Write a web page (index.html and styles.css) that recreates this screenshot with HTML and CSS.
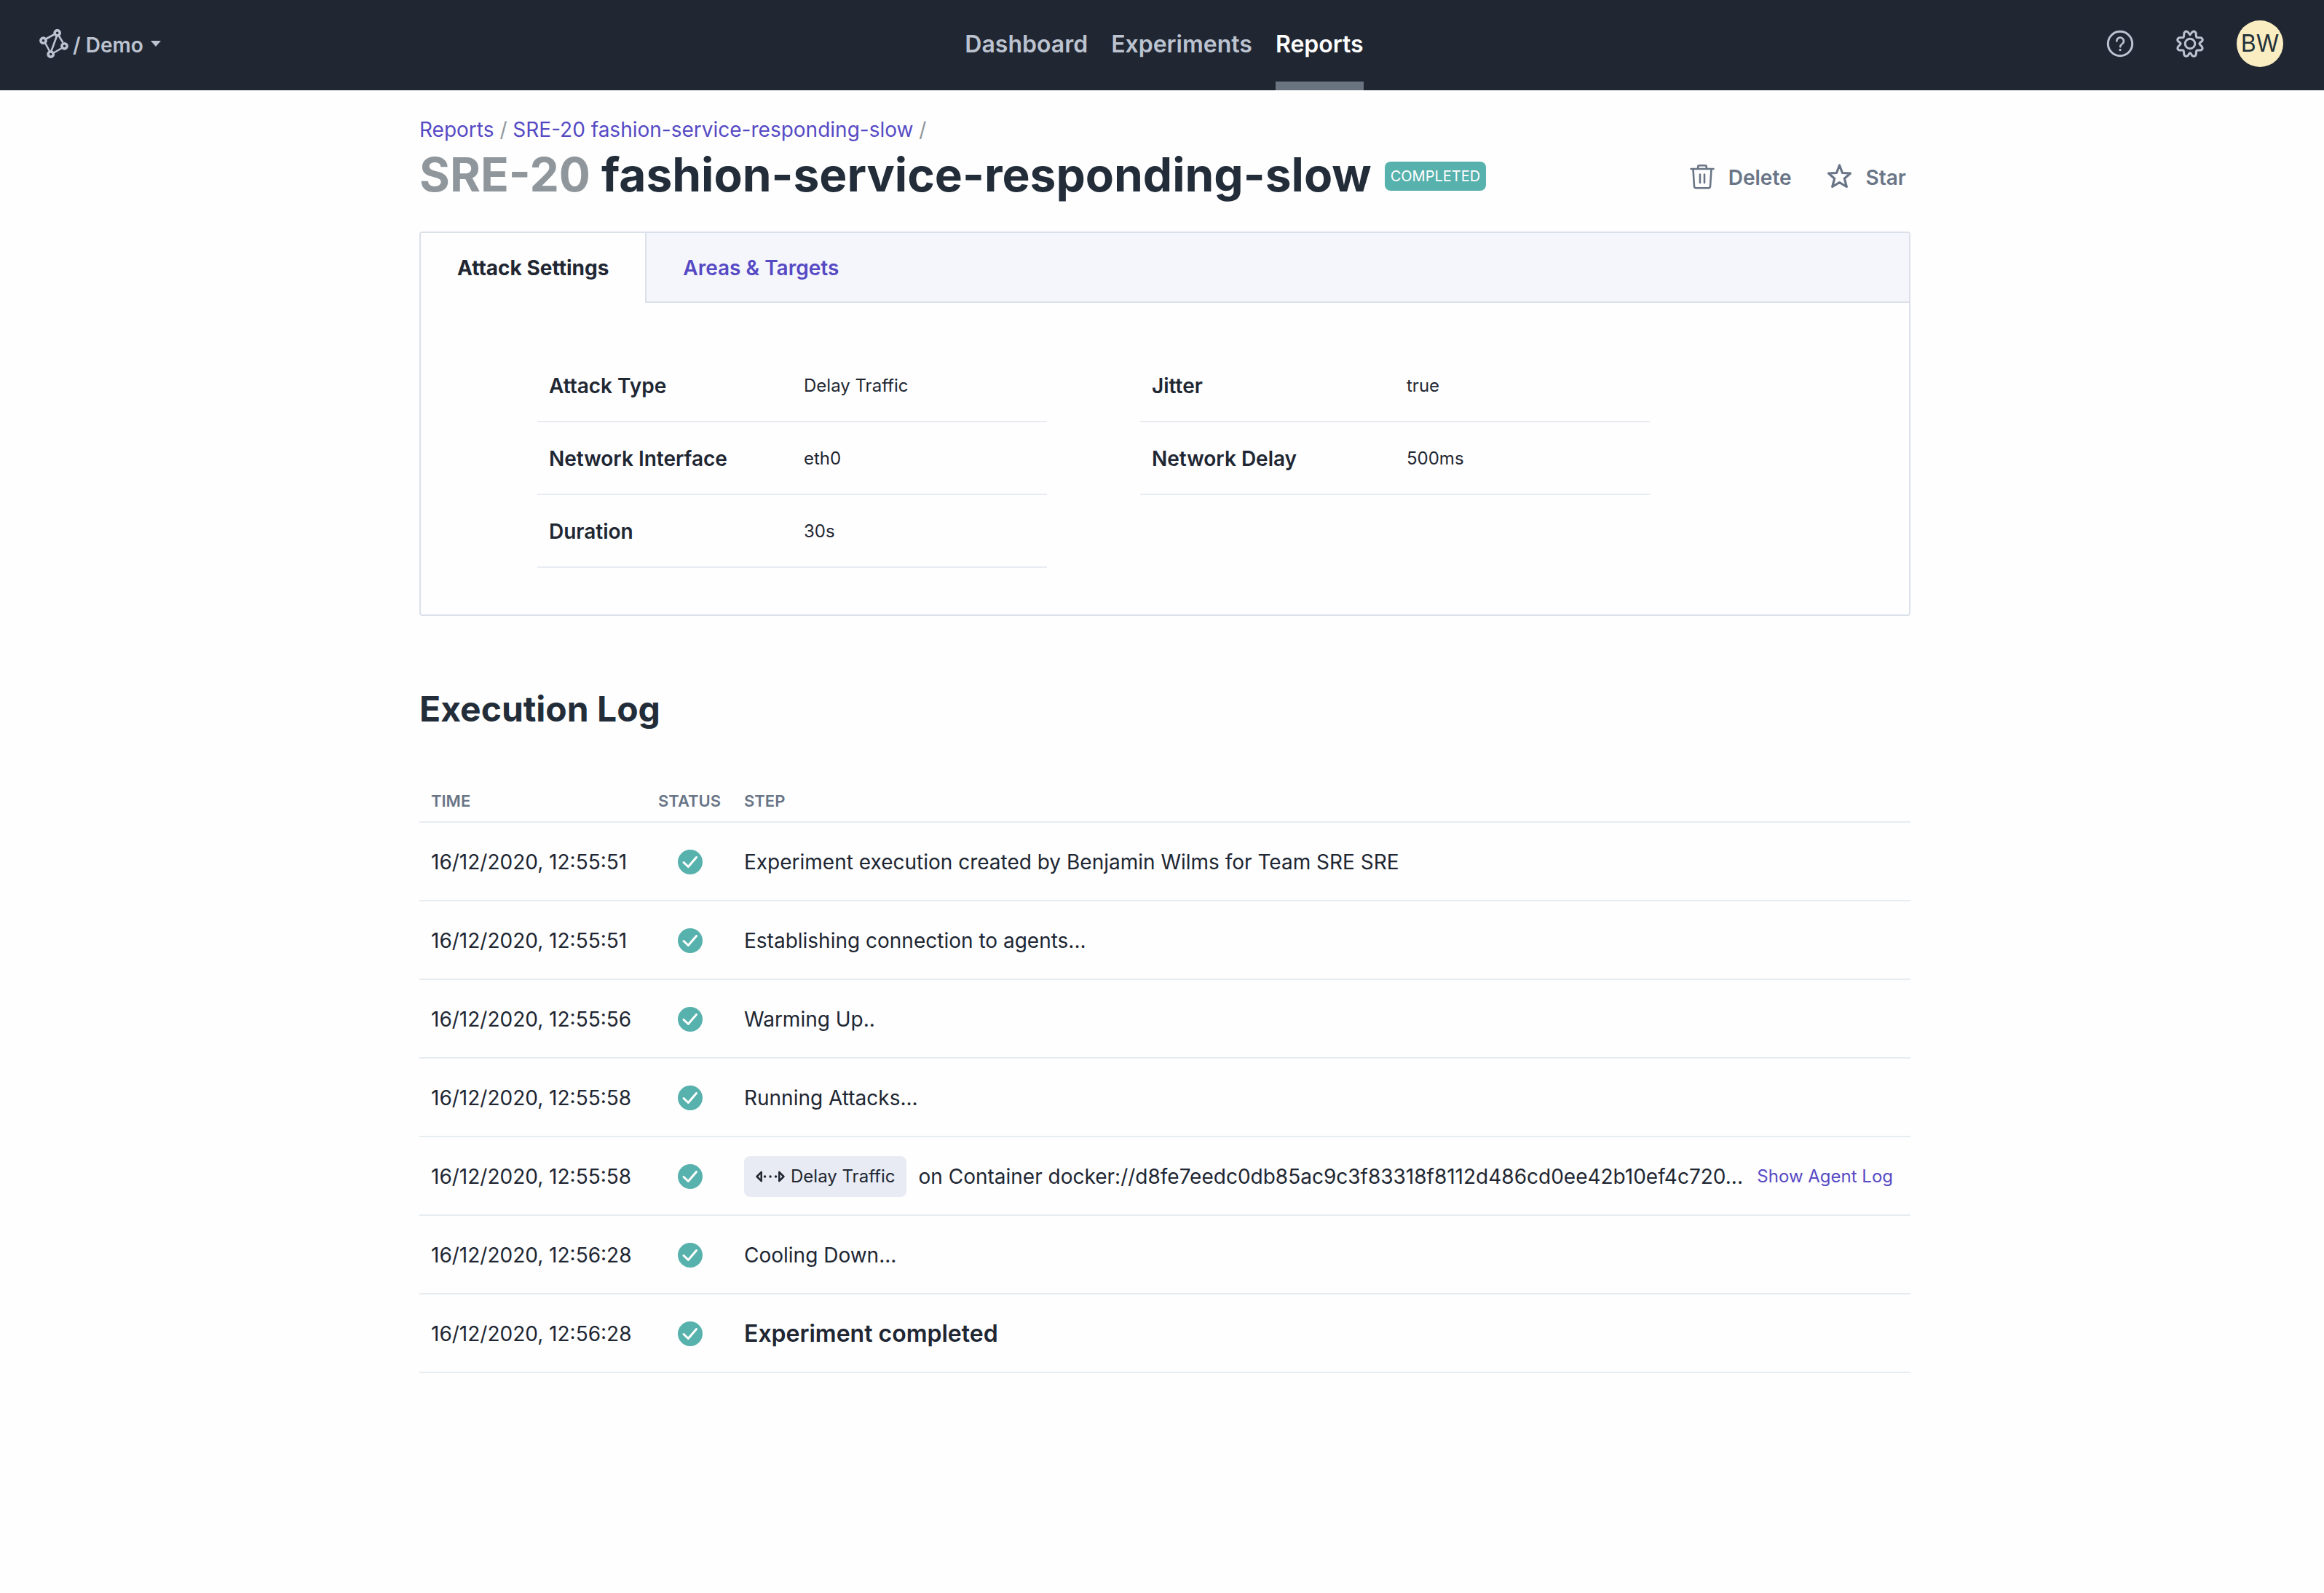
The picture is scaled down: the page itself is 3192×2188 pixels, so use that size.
FILE: index.html
```html
<!DOCTYPE html>
<html lang="en">
<head>
<meta charset="utf-8">
<title>SRE-20 fashion-service-responding-slow</title>
<link rel="stylesheet" href="styles.css">
</head>
<body>
<svg class="sprite" aria-hidden="true">
  <symbol id="check" viewBox="0 0 34 34">
    <circle cx="17" cy="17" r="17" fill="#57b1ad"/>
    <path d="M8 17.5 14.3 23.5 25.5 10.5" fill="none" stroke="#fff" stroke-width="3" stroke-linecap="round" stroke-linejoin="round"/>
  </symbol>
</svg>
<header class="topbar">
  <button class="team" type="button">
    <svg class="logo" viewBox="0 0 40 40" fill="none" stroke="currentColor" aria-hidden="true">
      <path d="M9 13.500 21 7M8 19 14 30M24 9.500 16.500 30M27 9.500 32.500 18.500M31 26 19 33" stroke-width="2.600"/>
      <circle cx="24.700" cy="5.300" r="3.600" stroke-width="3.600"/>
      <circle cx="5.500" cy="15.700" r="3.600" stroke-width="3.600"/>
      <circle cx="34.500" cy="23.300" r="3.600" stroke-width="3.600"/>
      <circle cx="15.700" cy="34.500" r="3.600" stroke-width="3.600"/>
    </svg>
    <span class="team-name">/ Demo</span>
    <svg class="caret" viewBox="0 0 14 8" fill="currentColor" aria-hidden="true"><path d="M0 0h14L7 8z"/></svg>
  </button>
  <nav class="nav">
    <a class="nav-link" href="#">Dashboard</a>
    <a class="nav-link" href="#">Experiments</a>
    <a class="nav-link nav-link-active" href="#" aria-current="page">Reports</a>
  </nav>
  <div class="tools">
    <button class="tool" type="button" aria-label="Help">
      <svg viewBox="0 0 40 40" fill="none" stroke="currentColor" stroke-linecap="round" stroke-linejoin="round" aria-hidden="true">
        <circle cx="20" cy="20" r="16.700" stroke-width="3"/>
        <path d="M15.300 16.500a4.800 4.800 0 1 1 7.500 3.800c-1.700 1.200-2.600 2-2.600 4" stroke-width="2.600"/>
        <circle cx="20" cy="28.600" r="1.700" fill="currentColor" stroke="none"/>
      </svg>
    </button>
    <button class="tool" type="button" aria-label="Settings">
      <svg viewBox="0 0 40 40" fill="none" stroke="currentColor" stroke-width="3" stroke-linejoin="round" aria-hidden="true">
        <circle cx="20" cy="20" r="6.800"/>
        <path d="M20 7.800 22.800 4.200Q25.500 1.500 28 5L28.600 10.600Q29 11.400 29.500 11.500L35 11.800Q38 13 37 16L33.200 19.200Q32.600 20 33.200 20.800L36.700 24.500Q38 27.600 35 28.900L29.800 29Q29 29.200 28.700 30L28.200 35Q26.500 38.500 23.300 36.800L20.800 33.200Q20 32.500 19.200 33.200L16.700 36.800Q13.500 38.500 11.800 35L11.300 30Q11 29.200 10.200 29L5 28.900Q2 27.600 3.300 24.500L6.800 20.800Q7.400 20 6.800 19.200L3 16Q2 13 5 11.800L10.500 11.500Q11.300 11.400 11.400 10.600L12 5Q14.500 1.500 17.200 4.200Z"/>
      </svg>
    </button>
    <button class="avatar" type="button" aria-label="Account BW">BW</button>
  </div>
</header>

<main class="page">
  <nav class="crumbs" aria-label="Breadcrumb">
    <a class="link" href="#">Reports</a> / <a class="link" href="#">SRE-20 fashion-service-responding-slow</a> /
  </nav>
  <div class="heading">
    <h1 class="title"><span class="title-key">SRE-20</span> fashion-service-responding-slow</h1>
    <span class="badge">COMPLETED</span>
    <div class="actions">
      <button class="action" type="button">
        <svg viewBox="0 0 36 36" fill="none" stroke="currentColor" stroke-width="2.600" stroke-linecap="round" stroke-linejoin="round" aria-hidden="true">
          <path d="M2.500 8h31M5.500 8.500 7 32a2.500 2.500 0 0 0 2.400 2.300h17.200A2.500 2.500 0 0 0 29 32L30.500 8.500M12.200 7.500V5.200a2 2 0 0 1 2-2h7.600a2 2 0 0 1 2 2V7.500M15 15.500v11.500M21 15.500v11.500"/>
        </svg>
        Delete
      </button>
      <button class="action" type="button">
        <svg viewBox="0 0 36 36" fill="none" stroke="currentColor" stroke-width="3.200" stroke-linejoin="round" aria-hidden="true">
          <path d="M17.500 3 21.500 13.500 32.500 14 24.300 21.200 27.300 32.500 17.500 26.500 7.700 32.500 10.700 21.200 2.500 14 13.500 13.500Z"/>
        </svg>
        Star
      </button>
    </div>
  </div>

  <section class="card">
    <div class="tabs" role="tablist">
      <button class="tab tab-active" type="button" role="tab" aria-selected="true">Attack Settings</button>
      <button class="tab" type="button" role="tab" aria-selected="false">Areas &amp; Targets</button>
    </div>
    <div class="settings">
      <dl class="facts">
        <div class="fact"><dt>Attack Type</dt><dd>Delay Traffic</dd></div>
        <div class="fact"><dt>Network Interface</dt><dd>eth0</dd></div>
        <div class="fact"><dt>Duration</dt><dd>30s</dd></div>
      </dl>
      <dl class="facts">
        <div class="fact"><dt>Jitter</dt><dd>true</dd></div>
        <div class="fact"><dt>Network Delay</dt><dd>500ms</dd></div>
      </dl>
    </div>
  </section>

  <h2 class="subtitle">Execution Log</h2>
  <table class="log">
    <thead>
      <tr><th class="col-time">TIME</th><th class="col-status">STATUS</th><th>STEP</th></tr>
    </thead>
    <tbody>
      <tr><td>16/12/2020, 12:55:51</td><td class="status"><svg role="img" aria-label="Success"><use href="#check"/></svg></td><td>Experiment execution created by Benjamin Wilms for Team SRE SRE</td></tr>
      <tr><td>16/12/2020, 12:55:51</td><td class="status"><svg role="img" aria-label="Success"><use href="#check"/></svg></td><td>Establishing connection to agents...</td></tr>
      <tr><td>16/12/2020, 12:55:56</td><td class="status"><svg role="img" aria-label="Success"><use href="#check"/></svg></td><td>Warming Up..</td></tr>
      <tr><td>16/12/2020, 12:55:58</td><td class="status"><svg role="img" aria-label="Success"><use href="#check"/></svg></td><td>Running Attacks...</td></tr>
      <tr><td>16/12/2020, 12:55:58</td><td class="status"><svg role="img" aria-label="Success"><use href="#check"/></svg></td><td>
        <div class="attack">
          <span class="chip">
            <svg viewBox="0 0 40 18" fill="none" stroke="currentColor" aria-hidden="true">
              <path d="M7.700 2.800v12.400L1.600 9zM32.300 2.800v12.400L38.400 9z" stroke-width="2.500" stroke-linejoin="round"/>
              <path d="M12.500 9h.1M20 9h.1M27.500 9h.1" stroke-width="3.400" stroke-linecap="round"/>
            </svg>
            Delay Traffic
          </span>
          <span class="target">on Container docker://d8fe7eedc0db85ac9c3f83318f8112d486cd0ee42b10ef4c720...</span>
          <a class="link agent-log" href="#">Show Agent Log</a>
        </div>
      </td></tr>
      <tr><td>16/12/2020, 12:56:28</td><td class="status"><svg role="img" aria-label="Success"><use href="#check"/></svg></td><td>Cooling Down...</td></tr>
      <tr><td>16/12/2020, 12:56:28</td><td class="status"><svg role="img" aria-label="Success"><use href="#check"/></svg></td><td class="done">Experiment completed</td></tr>
    </tbody>
  </table>
</main>
</body>
</html>
```
FILE: styles.css
```css
* {
  box-sizing: border-box;
}

body {
  margin: 0;
  background: #fefefe;
  color: #202632;
  font-family: Inter, "Liberation Sans", sans-serif;
  font-size: 28px;
  line-height: 40px;
}

button {
  margin: 0;
  padding: 0;
  border: 0;
  background: none;
  color: inherit;
  font: inherit;
  cursor: pointer;
}

svg {
  display: block;
  flex: none;
}

.sprite {
  position: absolute;
  width: 0;
  height: 0;
}

.link {
  color: #564ac4;
  text-decoration: none;
}

/* Top bar */
.topbar {
  display: grid;
  grid-template-columns: 1fr auto 1fr;
  grid-template-rows: 120px;
  align-items: center;
  height: 124px;
  padding: 0 56px 4px 54px;
  background: #202632;
  color: #bcc3d0;
}

.team {
  display: flex;
  align-items: center;
  justify-self: start;
  font-weight: 600;
}

.logo {
  width: 40px;
  height: 40px;
}

.team-name {
  margin: 4px 10px 0 6px;
}

.caret {
  width: 14px;
  height: 8px;
}

.nav {
  display: flex;
  align-self: start;
  gap: 32px;
  padding-left: 8px;
}

.nav-link {
  height: 124px;
  color: inherit;
  font-size: 32px;
  font-weight: 600;
  line-height: 122px;
  text-decoration: none;
}

.nav-link-active {
  border-bottom: 12px solid #6a7481;
  color: #fff;
}

.tools {
  display: flex;
  align-items: center;
  justify-self: end;
}

.tool {
  margin-right: 56px;
}

.tool + .avatar {
  margin-left: -12px;
}

.tool svg {
  width: 40px;
  height: 40px;
}

.avatar {
  width: 64px;
  height: 64px;
  border-radius: 50%;
  background: #faedc1;
  color: #22303a;
  font-size: 32px;
  line-height: 64px;
}

/* Page */
.page {
  box-sizing: content-box;
  max-width: 2048px;
  margin: 0 auto;
  padding: 34px 0 64px 8px;
}

.crumbs {
  color: #8f969c;
}

.heading {
  display: flex;
  align-items: center;
  gap: 18px;
  height: 88px;
}

.title {
  margin: 0;
  padding-bottom: 4px;
  color: #222d39;
  font-size: 64px;
  font-weight: 700;
  line-height: 84px;
}

.title-key {
  color: #8f969c;
}

.badge {
  height: 40px;
  padding: 0 8px;
  border-radius: 8px;
  background: #57b1ad;
  color: #fff;
  font-size: 20px;
  line-height: 40px;
}

.actions {
  display: flex;
  gap: 48px;
  margin-left: auto;
  padding: 4px 6px 0 0;
}

.action {
  display: flex;
  align-items: center;
  gap: 18px;
  color: #697586;
  font-weight: 600;
}

.action svg {
  width: 36px;
  height: 36px;
  margin-bottom: 4px;
}

/* Settings card */
.card {
  margin-top: 32px;
  border: 2px solid #dae1ea;
  border-radius: 4px;
}

.tabs {
  display: flex;
  height: 96px;
  background: #f5f6fb;
  box-shadow: inset 0 -2px #dae1ea;
}

.tab {
  padding: 0 50px;
  color: #564ac4;
  font-weight: 600;
}

.tab-active {
  border-right: 2px solid #dae1ea;
  background: #fefefe;
  color: #202632;
  font-weight: 700;
}

.settings {
  display: flex;
  gap: 128px;
  padding: 64px 160px;
}

.facts {
  flex: 0 1 700px;
  margin: 0;
}

.fact {
  display: grid;
  grid-template-columns: 1fr 1fr;
  align-items: center;
  height: 100px;
  padding: 2px 0 0 16px;
  column-gap: 16px;
  border-bottom: 2px solid #e8ebf3;
}

.fact dt {
  font-weight: 600;
}

.fact dd {
  margin: 0;
  font-size: 24px;
}

/* Execution log */
.subtitle {
  margin: 96px 0 64px;
  color: #222d39;
  font-size: 48px;
  font-weight: 700;
  line-height: 64px;
}

.log {
  width: 100%;
  border-collapse: separate;
  border-spacing: 0;
  table-layout: fixed;
}

.log th {
  height: 60px;
  padding: 2px 16px 0;
  border-bottom: 2px solid #e7ecf1;
  color: #697586;
  font-size: 22px;
  font-weight: 600;
  text-align: left;
}

.log .col-time {
  width: 312px;
}

.log .col-status {
  width: 118px;
}

.log td {
  height: 108px;
  padding: 2px 16px 0;
  border-bottom: 2px solid #e7ecf1;
  white-space: nowrap;
}

.log .status {
  padding-right: 14px;
}

.status svg {
  width: 34px;
  height: 34px;
  margin: 0 auto;
}

.attack {
  display: flex;
  align-items: center;
  gap: 16px;
  padding-right: 8px;
}

.chip {
  display: flex;
  flex: none;
  align-items: center;
  gap: 8px;
  height: 56px;
  padding: 0 16px;
  border-radius: 8px;
  background: #e8ebf3;
  font-size: 24px;
}

.chip svg {
  width: 40px;
  height: 18px;
}

.target {
  overflow: hidden;
  text-overflow: ellipsis;
}

.agent-log {
  margin-left: auto;
  font-size: 24px;
}

.log .done {
  font-size: 32px;
  font-weight: 600;
}
```
